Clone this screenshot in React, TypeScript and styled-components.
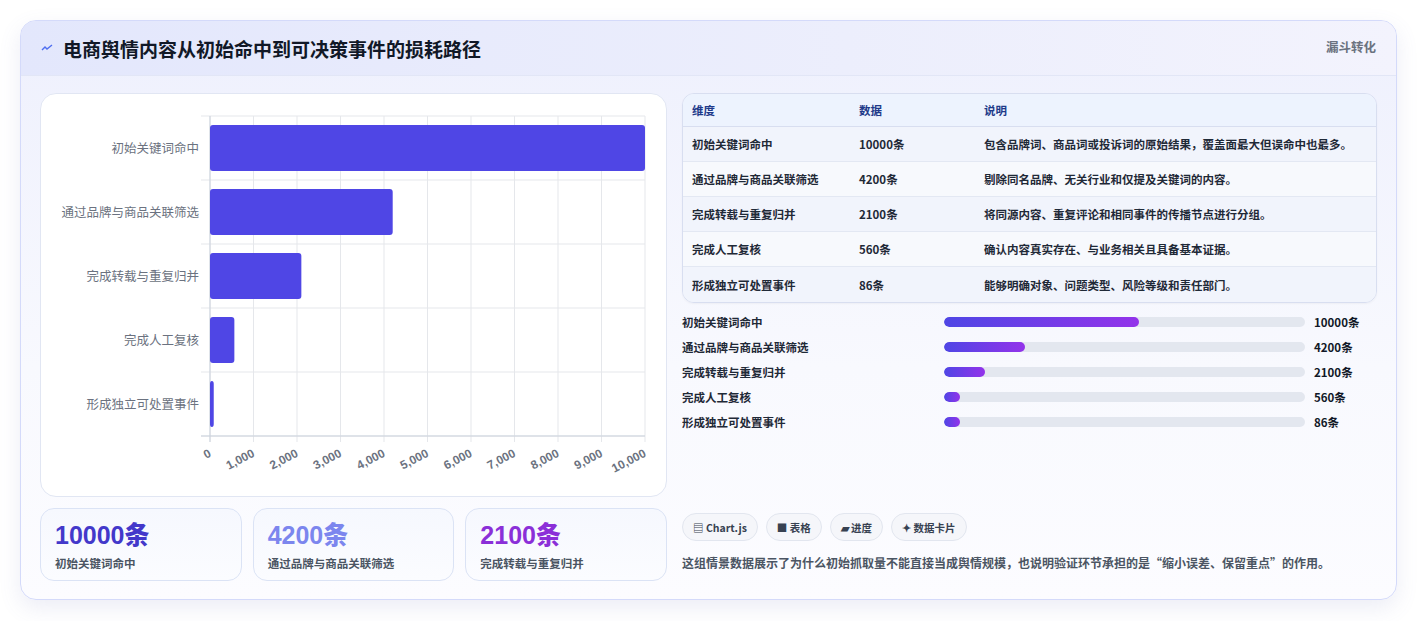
import React from "react";
import styled, { createGlobalStyle } from "styled-components";

const Global = createGlobalStyle`
  html, body { margin: 0; padding: 0; background: #fff; }
  body { font-family: "Noto Sans CJK SC", "Noto Sans", sans-serif; }
  * { box-sizing: border-box; }
`;

const Page = styled.div`
  padding: 20px 20px 0 20px;
  width: 1417px;
  height: 621px;
`;

const Card = styled.div`
  width: 1377px;
  height: 580px;
  border: 1px solid #d4dafa;
  border-radius: 16px;
  background: linear-gradient(180deg, #eef0fd 0%, #f8f9fe 60%, #fcfcff 100%);
  box-shadow: 0 8px 22px rgba(100, 110, 180, 0.12);
  overflow: hidden;
  display: flex;
  flex-direction: column;
`;

const Header = styled.div`
  height: 55px;
  display: flex;
  align-items: center;
  justify-content: space-between;
  padding: 0 20px 0 20px;
  background: linear-gradient(90deg, #e3e7fc, #eceefc 60%, #f3f3fd);
  border-bottom: 1px solid #e2e6f6;
`;

const Title = styled.h1`
  margin: 0;
  display: flex;
  align-items: center;
  gap: 10px;
  font-size: 19px;
  font-weight: 700;
  color: #111827;
`;

const Tag = styled.span`
  align-self: flex-start;
  margin-top: 16px;
  font-size: 12.5px;
  font-weight: 700;
  color: #6b7280;
`;

const Body = styled.div`
  flex: 1;
  display: grid;
  grid-template-columns: 627px 695px;
  gap: 15px;
  padding: 17px 19px 18px 19px;
`;

const Col = styled.div`
  display: flex;
  flex-direction: column;
`;

const ChartBox = styled.div`
  height: 404px;
  background: #fff;
  border: 1px solid #e1e6f3;
  border-radius: 16px;
`;

const Stats = styled.div`
  margin-top: 11px;
  display: grid;
  grid-template-columns: repeat(3, 1fr);
  gap: 11px;
`;

const Stat = styled.div`
  height: 73px;
  border: 1px solid #dbe3f5;
  border-radius: 14px;
  background: linear-gradient(180deg, #f6f8fe, #fbfcff);
  padding: 10px 14px;
`;

const StatNum = styled.div<{ $c: string }>`
  font-size: 25px;
  font-weight: 800;
  color: ${(p) => p.$c};
  line-height: 32px;
  font-family: "Liberation Sans", "Noto Sans CJK SC", sans-serif;
`;

const StatLabel = styled.div`
  font-size: 11.5px;
  font-weight: 600;
  color: #4b5563;
  margin-top: 4px;
`;

const Table = styled.table`
  width: 100%;
  border-collapse: separate;
  border-spacing: 0;
  border: 1px solid #d8def0;
  border-radius: 12px;
  overflow: hidden;
  font-size: 11.5px;
  font-weight: 600;
  box-shadow: 0 1px 2px rgba(0, 0, 0, 0.04);
`;

const Th = styled.th<{ $w?: number }>`
  text-align: left;
  height: 33px;
  padding: 0 9px;
  color: #1e3a8a;
  background: #edf3fe;
  border-bottom: 1px solid #d8def0;
  width: ${(p) => (p.$w ? p.$w + "px" : "auto")};
`;

const Td = styled.td<{ $last?: boolean }>`
  height: 35px;
  padding: 0 9px;
  color: #1f2937;
  border-bottom: ${(p) => (p.$last ? "none" : "1px solid #e3e8f3")};
`;

const Tr = styled.tr<{ $alt: boolean }>`
  background: ${(p) => (p.$alt ? "#f7f9fd" : "#f1f4fc")};
`;

const Progress = styled.div`
  margin-top: 11px;
  display: flex;
  flex-direction: column;
  gap: 9px;
`;

const PRow = styled.div`
  display: grid;
  grid-template-columns: 262px 361px auto;
  align-items: center;
  gap: 0;
  height: 16px;
  font-size: 11.5px;
  font-weight: 600;
  color: #1f2937;
`;

const Track = styled.div`
  height: 10px;
  border-radius: 5px;
  background: #e3e7ef;
  overflow: hidden;
`;

const Fill = styled.div`
  height: 100%;
  border-radius: 5px;
  background: linear-gradient(90deg, #4f46e5, #9333ea);
`;

const PVal = styled.span`
  padding-left: 9px;
  font-weight: 700;
  color: #111827;
`;

const Spacer = styled.div`
  flex: 1;
`;

const Chips = styled.div`
  display: flex;
  gap: 8px;
`;

const Chip = styled.span`
  height: 28px;
  padding: 0 10px;
  display: inline-flex;
  align-items: center;
  gap: 4px;
  border: 1px solid #e2e6ef;
  border-radius: 14px;
  background: #f5f6fa;
  font-size: 10.5px;
  font-weight: 700;
  color: #374151;
`;

const Note = styled.p`
  margin: 13px 0 10px;
  font-size: 12px;
  font-weight: 600;
  color: #4b5563;
`;

const rows = [
  { n: "初始关键词命中", v: 10000, d: "包含品牌词、商品词或投诉词的原始结果，覆盖面最大但误命中也最多。", p: 54 },
  { n: "通过品牌与商品关联筛选", v: 4200, d: "剔除同名品牌、无关行业和仅提及关键词的内容。", p: 22.5 },
  { n: "完成转载与重复归并", v: 2100, d: "将同源内容、重复评论和相同事件的传播节点进行分组。", p: 11.4 },
  { n: "完成人工复核", v: 560, d: "确认内容真实存在、与业务相关且具备基本证据。", p: 4.4 },
  { n: "形成独立可处置事件", v: 86, d: "能够明确对象、问题类型、风险等级和责任部门。", p: 4.4 },
];

const Chart = () => {
  const x0 = 169, x1 = 604, y0 = 22, band = 64;
  const sx = (v: number) => x0 + ((x1 - x0) * v) / 10000;
  const ticks = [0, 1000, 2000, 3000, 4000, 5000, 6000, 7000, 8000, 9000, 10000];
  return (
    <svg width="627" height="404" viewBox="0 0 627 404">
      {ticks.map((t) => (
        <line key={t} x1={sx(t)} x2={sx(t)} y1={y0} y2={y0 + band * 5 + 6} stroke="#e5e7eb" />
      ))}
      {[0, 1, 2, 3, 4, 5].map((i) => (
        <line key={i} x1={x0 - 9} x2={x1} y1={y0 + band * i} y2={y0 + band * i} stroke="#e5e7eb" />
      ))}
      <line x1={x0} x2={x0} y1={y0} y2={y0 + band * 5 + 6} stroke="#cbd2dc" />
      <line x1={x0 - 9} x2={x1} y1={y0 + band * 5} y2={y0 + band * 5} stroke="#cbd2dc" />
      {rows.map((r, i) => (
        <g key={r.n}>
          <rect x={x0} y={y0 + band * i + 9} width={Math.max(sx(r.v) - x0, 3)} height={46} rx={3} fill="#4f46e5" />
          <text x={x0 - 11} y={y0 + band * i + 37} textAnchor="end" fontSize="12.5" fill="#6b7280" fontFamily="'Noto Sans CJK SC', sans-serif">{r.n}</text>
        </g>
      ))}
      {ticks.map((t) => (
        <text key={t} x={sx(t) + 2} y={y0 + band * 5 + 20} textAnchor="end" fontSize="12" fontWeight="700" fill="#6b7280" fontFamily="'Liberation Sans', sans-serif" transform={`rotate(-27 ${sx(t) + 2} ${y0 + band * 5 + 20})`}>
          {t.toLocaleString("en-US")}
        </text>
      ))}
    </svg>
  );
};

export default function App() {
  return (
    <Page>
      <Global />
      <Card>
        <Header>
          <Title>
            <svg width="12" height="12" viewBox="0 0 12 12"><path d="M1 8 L4 5 L6 7 L11 3" stroke="#4f6ef0" strokeWidth="1.4" fill="none" /></svg>
            电商舆情内容从初始命中到可决策事件的损耗路径
          </Title>
          <Tag>漏斗转化</Tag>
        </Header>
        <Body>
          <Col>
            <ChartBox><Chart /></ChartBox>
            <Stats>
              <Stat><StatNum $c="#4338ca">10000条</StatNum><StatLabel>初始关键词命中</StatLabel></Stat>
              <Stat><StatNum $c="#7c86ee">4200条</StatNum><StatLabel>通过品牌与商品关联筛选</StatLabel></Stat>
              <Stat><StatNum $c="#8b2fd8">2100条</StatNum><StatLabel>完成转载与重复归并</StatLabel></Stat>
            </Stats>
          </Col>
          <Col>
            <Table>
              <thead>
                <tr><Th $w={167}>维度</Th><Th $w={125}>数据</Th><Th>说明</Th></tr>
              </thead>
              <tbody>
                {rows.map((r, i) => (
                  <Tr key={r.n} $alt={i % 2 === 1}>
                    <Td $last={i === 4}>{r.n}</Td>
                    <Td $last={i === 4}>{r.v}条</Td>
                    <Td $last={i === 4}>{r.d}</Td>
                  </Tr>
                ))}
              </tbody>
            </Table>
            <Progress>
              {rows.map((r) => (
                <PRow key={r.n}>
                  <span>{r.n}</span>
                  <Track><Fill style={{ width: r.p + "%" }} /></Track>
                  <PVal>{r.v}条</PVal>
                </PRow>
              ))}
            </Progress>
            <Spacer />
            <Chips>
              <Chip>▤ Chart.js</Chip>
              <Chip>■ 表格</Chip>
              <Chip>▰ 进度</Chip>
              <Chip>✦ 数据卡片</Chip>
            </Chips>
            <Note>这组情景数据展示了为什么初始抓取量不能直接当成舆情规模，也说明验证环节承担的是“缩小误差、保留重点”的作用。</Note>
          </Col>
        </Body>
      </Card>
    </Page>
  );
}
